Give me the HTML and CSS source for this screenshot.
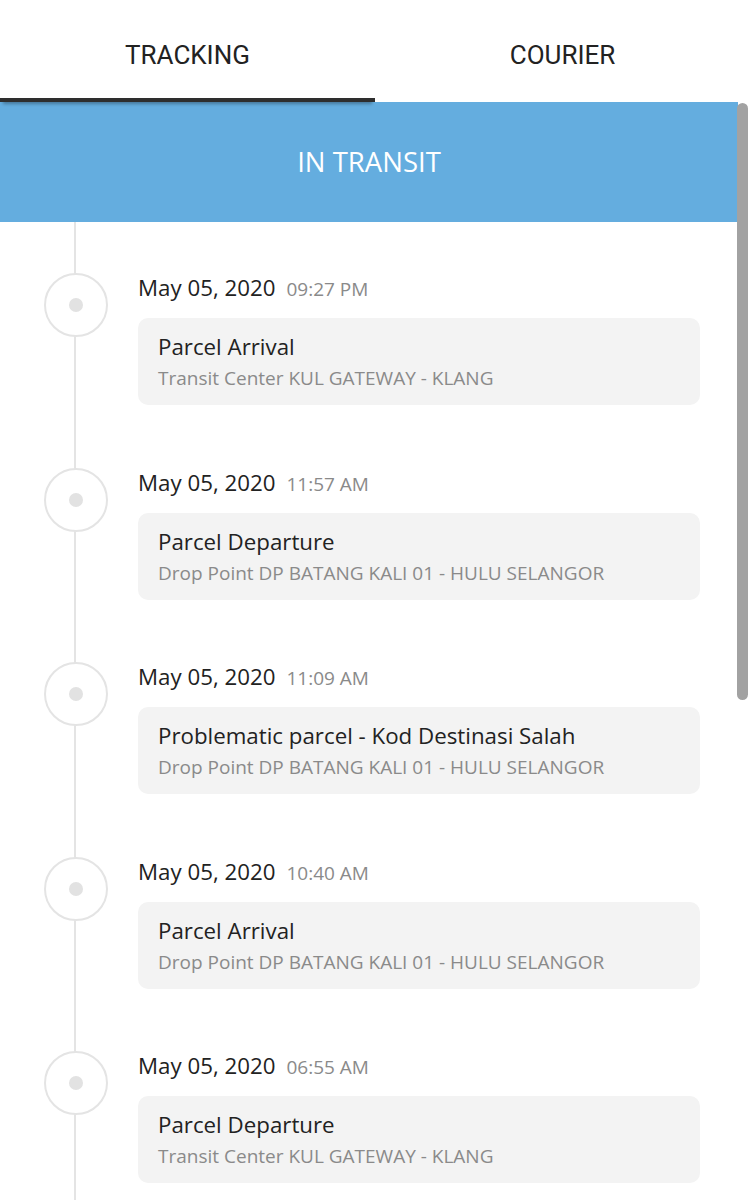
FILE: index.html
```html
<!DOCTYPE html>
<html>
<head>
<meta charset="utf-8">
<link rel="stylesheet" href="styles.css">
</head>
<body>
<div class="page">
  <nav class="tabs">
    <div class="tab active">TRACKING</div>
    <div class="tab">COURIER</div>
  </nav>
  <main class="content">
    <div class="status">IN TRANSIT</div>
    <ul class="timeline">
      <li class="event">
        <div class="node"><span class="dot"></span></div>
        <div class="info">
          <div class="when"><span class="date">May 05, 2020</span><span class="time">09:27 PM</span></div>
          <div class="card">
            <div class="title">Parcel Arrival</div>
            <div class="place">Transit Center KUL GATEWAY - KLANG</div>
          </div>
        </div>
      </li>
      <li class="event">
        <div class="node"><span class="dot"></span></div>
        <div class="info">
          <div class="when"><span class="date">May 05, 2020</span><span class="time">11:57 AM</span></div>
          <div class="card">
            <div class="title">Parcel Departure</div>
            <div class="place">Drop Point DP BATANG KALI 01 - HULU SELANGOR</div>
          </div>
        </div>
      </li>
      <li class="event">
        <div class="node"><span class="dot"></span></div>
        <div class="info">
          <div class="when"><span class="date">May 05, 2020</span><span class="time">11:09 AM</span></div>
          <div class="card">
            <div class="title">Problematic parcel - Kod Destinasi Salah</div>
            <div class="place">Drop Point DP BATANG KALI 01 - HULU SELANGOR</div>
          </div>
        </div>
      </li>
      <li class="event">
        <div class="node"><span class="dot"></span></div>
        <div class="info">
          <div class="when"><span class="date">May 05, 2020</span><span class="time">10:40 AM</span></div>
          <div class="card">
            <div class="title">Parcel Arrival</div>
            <div class="place">Drop Point DP BATANG KALI 01 - HULU SELANGOR</div>
          </div>
        </div>
      </li>
      <li class="event">
        <div class="node"><span class="dot"></span></div>
        <div class="info">
          <div class="when"><span class="date">May 05, 2020</span><span class="time">06:55 AM</span></div>
          <div class="card">
            <div class="title">Parcel Departure</div>
            <div class="place">Transit Center KUL GATEWAY - KLANG</div>
          </div>
        </div>
      </li>
    </ul>
    <div class="scrollbar"></div>
  </main>
</div>
</body>
</html>
```

FILE: styles.css
```css
* { box-sizing: border-box; }
html, body { margin: 0; padding: 0; background: #fff; }
body { width: 750px; height: 1200px; overflow: hidden; font-family: "Open Sans", "Noto Sans", sans-serif; }
.page { width: 750px; }

.tabs { display: flex; height: 102px; background: #fff; }
.tab {
  flex: 1;
  text-align: center;
  font-family: Roboto, "Liberation Sans", sans-serif;
  font-size: 26px;
  color: #222;
  padding-top: 12px;
  line-height: 86px;
  border-bottom: 4px solid transparent;
}
.tab.active { border-bottom-color: #2e2e2e; box-shadow: 0 5px 3px -3px rgba(0,0,0,0.3); position: relative; z-index: 1; }

.content { position: relative; width: 750px; }
.status {
  width: 738px;
  height: 120px;
  background: #64addf;
  color: #fff;
  font-size: 27.5px;
  line-height: 120px;
  text-align: center;
}

.timeline {
  list-style: none;
  margin: 0;
  padding: 51px 0 0 0;
  width: 738px;
  background: linear-gradient(#e4e4e4, #e4e4e4) no-repeat 74px 0 / 2px 100%;
}
.event { display: flex; padding-left: 44px; height: 194.5px; }
.node {
  flex: none;
  width: 64px;
  height: 64px;
  border: 2px solid #e4e4e4;
  border-radius: 50%;
  background: #fff;
  display: flex;
  align-items: center;
  justify-content: center;
}
.dot { width: 14px; height: 14px; border-radius: 50%; background: #e2e2e2; }
.info { margin-left: 30px; width: 562px; }
.when { display: flex; align-items: baseline; gap: 11px; line-height: 30px; }
.date { font-size: 22.3px; color: #222; }
.time { font-size: 19px; color: #8a8a8a; }
.card {
  margin-top: 14px;
  background: #f3f3f3;
  border-radius: 10px;
  padding: 14px 20px 11px;
}
.title { font-size: 22.3px; line-height: 30px; color: #222; }
.place { font-size: 19px; line-height: 32px; color: #8a8a8a; }

.scrollbar {
  position: absolute;
  top: 1px;
  right: 2px;
  width: 11px;
  height: 597px;
  border-radius: 6px;
  background: #a2a2a2;
}
```
